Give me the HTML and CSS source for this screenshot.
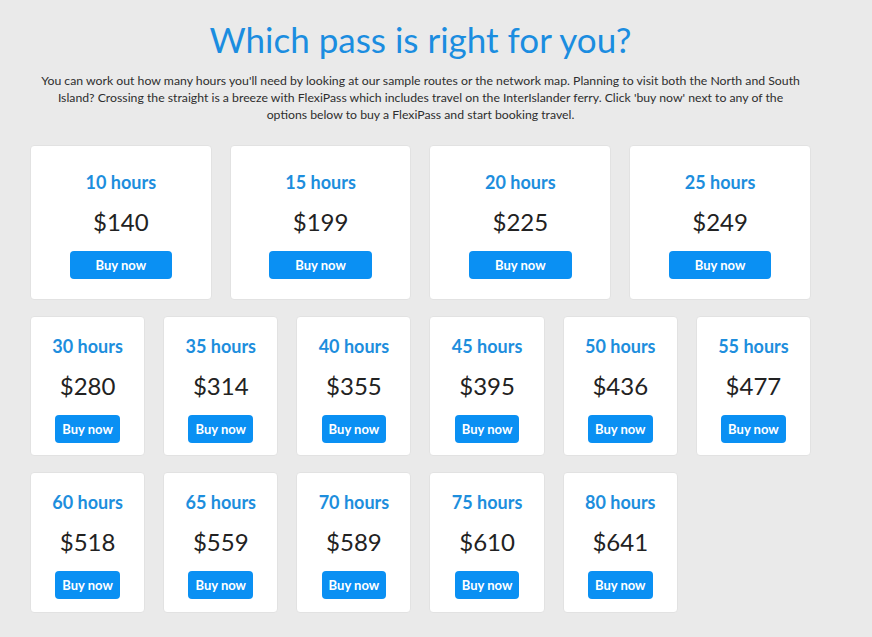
FILE: index.html
```html
<!DOCTYPE html>
<html lang="en">
<head>
<meta charset="utf-8">
<title>Which pass is right for you?</title>
<link rel="stylesheet" href="styles.css">
</head>
<body>
<main class="page">
  <h1 class="title">Which pass is right for you?</h1>
  <p class="intro">You can work out how many hours you'll need by looking at our sample routes or the network map. Planning to visit both the North and South Island? Crossing the straight is a breeze with FlexiPass which includes travel on the InterIslander ferry. Click 'buy now' next to any of the options below to buy a FlexiPass and start booking travel.</p>
  <section class="passes">
    <div class="card card-wide"><div class="hours">10 hours</div><div class="price">$140</div><button class="buy">Buy now</button></div>
    <div class="card card-wide"><div class="hours">15 hours</div><div class="price">$199</div><button class="buy">Buy now</button></div>
    <div class="card card-wide"><div class="hours">20 hours</div><div class="price">$225</div><button class="buy">Buy now</button></div>
    <div class="card card-wide"><div class="hours">25 hours</div><div class="price">$249</div><button class="buy">Buy now</button></div>
    <div class="card"><div class="hours">30 hours</div><div class="price">$280</div><button class="buy">Buy now</button></div>
    <div class="card"><div class="hours">35 hours</div><div class="price">$314</div><button class="buy">Buy now</button></div>
    <div class="card"><div class="hours">40 hours</div><div class="price">$355</div><button class="buy">Buy now</button></div>
    <div class="card"><div class="hours">45 hours</div><div class="price">$395</div><button class="buy">Buy now</button></div>
    <div class="card"><div class="hours">50 hours</div><div class="price">$436</div><button class="buy">Buy now</button></div>
    <div class="card"><div class="hours">55 hours</div><div class="price">$477</div><button class="buy">Buy now</button></div>
    <div class="card"><div class="hours">60 hours</div><div class="price">$518</div><button class="buy">Buy now</button></div>
    <div class="card"><div class="hours">65 hours</div><div class="price">$559</div><button class="buy">Buy now</button></div>
    <div class="card"><div class="hours">70 hours</div><div class="price">$589</div><button class="buy">Buy now</button></div>
    <div class="card"><div class="hours">75 hours</div><div class="price">$610</div><button class="buy">Buy now</button></div>
    <div class="card"><div class="hours">80 hours</div><div class="price">$641</div><button class="buy">Buy now</button></div>
  </section>
</main>
</body>
</html>
```
FILE: styles.css
```css
* { box-sizing: border-box; }

body {
  margin: 0;
  background: #eaeaea;
  font-family: "Lato", "Noto Sans", "Liberation Sans", sans-serif;
  color: #2b2b2b;
}

.page {
  width: 781px;
  margin: 0 0 0 30px;
  padding: 18px 0 20px;
}

.title {
  margin: 0;
  font-size: 35px;
  line-height: 42px;
  font-weight: 400;
  color: #1b8de0;
  text-align: center;
}

.intro {
  margin: 12px auto 0;
  max-width: 766px;
  font-size: 12.25px;
  line-height: 17px;
  text-align: center;
  color: #2e2e2e;
}

.passes {
  margin-top: 22px;
  display: grid;
  grid-template-columns: repeat(12, 1fr);
  column-gap: 18px;
  row-gap: 16px;
}

.card {
  grid-column: span 2;
  background: #fff;
  border: 1px solid #e2e2e2;
  border-radius: 4px;
  padding: 11%;
  display: flex;
  flex-direction: column;
  align-items: center;
}

.card-wide {
  grid-column: span 3;
}

.hours {
  font-size: 18px;
  line-height: 32px;
  font-weight: 700;
  color: #1d8edd;
}

.price {
  margin-top: 8px;
  font-size: 24px;
  line-height: 32px;
  color: #222;
}

.buy {
  margin-top: 13px;
  width: 73.5%;
  padding: 6px 0;
  border: 0;
  border-radius: 4px;
  background: #0a90f3;
  color: #fff;
  font-family: inherit;
  font-size: 13px;
  font-weight: 700;
  line-height: 16px;
}
```
